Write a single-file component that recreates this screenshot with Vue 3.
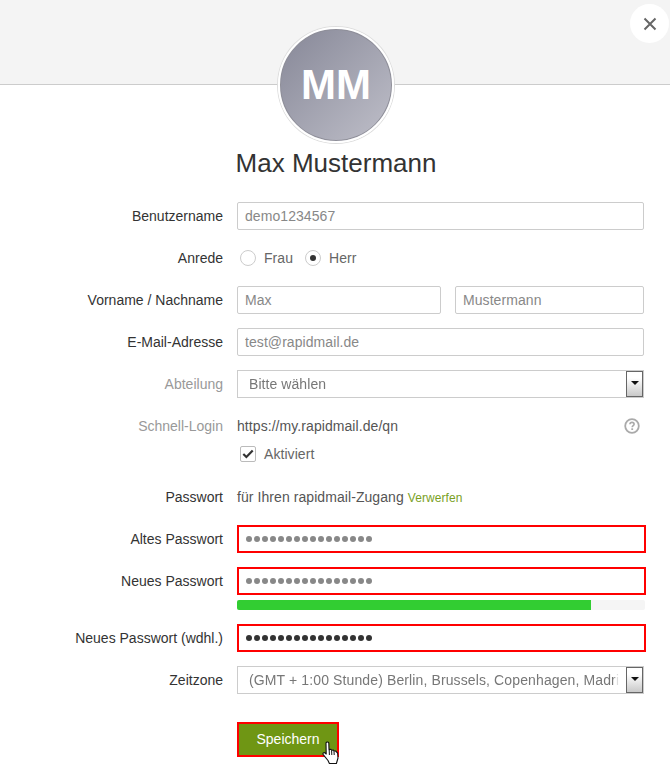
<template>
  <div class="page">
    <header class="band">
      <button class="close" type="button" aria-label="Schließen">
        <svg width="14" height="14" viewBox="0 0 14 14">
          <path d="M1.5 1.5 L12.5 12.5 M12.5 1.5 L1.5 12.5" stroke="#666" stroke-width="2" fill="none" />
        </svg>
      </button>
    </header>

    <div class="identity">
      <div class="avatar">MM</div>
      <h1 class="name">Max Mustermann</h1>
    </div>

    <form class="form" @submit.prevent>
      <div class="row">
        <label class="label">Benutzername</label>
        <input class="input" type="text" value="demo1234567" readonly />
      </div>

      <div class="row">
        <label class="label">Anrede</label>
        <div class="radios">
          <span class="radio"></span><span class="radio-text">Frau</span>
          <span class="radio on"></span><span class="radio-text">Herr</span>
        </div>
      </div>

      <div class="row">
        <label class="label">Vorname / Nachname</label>
        <div class="pair">
          <input class="input first" type="text" value="Max" readonly />
          <input class="input" type="text" value="Mustermann" readonly />
        </div>
      </div>

      <div class="row">
        <label class="label">E-Mail-Adresse</label>
        <input class="input" type="text" value="test@rapidmail.de" readonly />
      </div>

      <div class="row">
        <label class="label muted">Abteilung</label>
        <div class="select">
          <span class="select-text">Bitte wählen</span>
          <span class="select-btn"><i class="arrow"></i></span>
        </div>
      </div>

      <div class="row tight">
        <label class="label muted">Schnell-Login</label>
        <div class="quick">
          <span class="plain">https://my.rapidmail.de/qn</span>
          <svg class="help" width="16" height="16" viewBox="0 0 16 16">
            <circle cx="8" cy="8" r="6.8" fill="none" stroke="#aaa" stroke-width="1.8" />
            <path d="M5.9 6.3 C6 4.9 7 4.4 8 4.4 C9.2 4.4 10.1 5.1 10.1 6.2 C10.1 7.5 8.2 7.7 8.2 9.2" fill="none" stroke="#aaa" stroke-width="1.6" />
            <rect x="7.3" y="10.3" width="1.8" height="1.7" fill="#aaa" />
          </svg>
        </div>
      </div>

      <div class="row wide">
        <span class="label"></span>
        <div class="check-line">
          <span class="check">
            <svg width="12" height="10" viewBox="0 0 12 10">
              <path d="M1.3 5 L4.4 8 L10.7 1.5" fill="none" stroke="#333" stroke-width="2.2" />
            </svg>
          </span>
          <span class="radio-text">Aktiviert</span>
        </div>
      </div>

      <div class="row">
        <label class="label">Passwort</label>
        <div class="plain">für Ihren rapidmail-Zugang <a class="discard">Verwerfen</a></div>
      </div>

      <div class="row">
        <label class="label">Altes Passwort</label>
        <div class="secret"><i v-for="n in 16" :key="n" class="dot"></i></div>
      </div>

      <div class="row tight">
        <label class="label">Neues Passwort</label>
        <div class="secret"><i v-for="n in 16" :key="n" class="dot"></i></div>
      </div>

      <div class="meter-row">
        <div class="meter"><div class="meter-fill" :style="{ width: strength + '%' }"></div></div>
      </div>

      <div class="row">
        <label class="label">Neues Passwort (wdhl.)</label>
        <div class="secret dark"><i v-for="n in 16" :key="n" class="dot"></i></div>
      </div>

      <div class="row">
        <label class="label">Zeitzone</label>
        <div class="select">
          <span class="select-text wide-text">(GMT + 1:00 Stunde) Berlin, Brussels, Copenhagen, Madri</span>
          <span class="select-btn"><i class="arrow"></i></span>
        </div>
      </div>

      <div class="actions">
        <button class="save" type="submit">Speichern</button>
        <svg class="pointer" width="17" height="24" viewBox="0 0 17 24">
          <path d="M4 2 C4.4 .7 6.4 .7 6.8 2 L7 8.6 L9 8.2 L9.6 9.2 L11.4 9 L12 10 L13.6 10 L15.6 12 L16 17 L14.4 22.5 L7.4 22.5 L6 19.5 L1.2 13.6 C.4 12.2 2 11 3.2 12 L4.2 13 Z" fill="#fff" stroke="#111" stroke-width="1.1" stroke-linejoin="round" />
          <path d="M7.2 9 L7.4 14 M9.6 9.4 L9.8 14 M12 10.2 L12.2 14" stroke="#111" stroke-width="1" fill="none" />
        </svg>
      </div>
    </form>
  </div>
</template>

<script setup>
const strength = 86.8
</script>

<style>
html, body {
  margin: 0;
  background: #fff;
}
</style>

<style scoped>
.page {
  position: relative;
  width: 670px;
  height: 775px;
  overflow: hidden;
  font-family: "Liberation Sans", Arial, sans-serif;
  font-size: 14px;
  color: #333;
  background: #fff;
}

.band {
  height: 84px;
  background: #f4f4f4;
  border-bottom: 1px solid #ccc;
}

.close {
  position: absolute;
  top: 4px;
  left: 630px;
  width: 39px;
  height: 39px;
  padding: 0;
  border: 0;
  border-radius: 50%;
  background: #fff;
  display: flex;
  align-items: center;
  justify-content: center;
}

.identity {
  display: flex;
  flex-direction: column;
  align-items: center;
  padding-left: 2px;
  margin-top: -58px;
}

.avatar {
  width: 112px;
  height: 112px;
  border: 2px solid #fff;
  border-radius: 50%;
  box-shadow: 0 0 0 1px #ddd, inset 0 0 0 1px #8f8f99;
  background: linear-gradient(135deg, #868797, #bfbfc9);
  color: #fff;
  font-size: 42px;
  font-weight: bold;
  display: flex;
  align-items: center;
  justify-content: center;
}

.name {
  margin: 5px 0 0;
  font-size: 26px;
  font-weight: normal;
  line-height: 30px;
  color: #333;
}

.form {
  margin-top: 24px;
}

.row {
  display: flex;
  align-items: center;
  min-height: 28px;
  margin-bottom: 14px;
  padding-right: 26px;
}

.row.tight {
  margin-bottom: 0;
}

.row.wide {
  margin-bottom: 15px;
}

.label {
  flex: none;
  width: 223px;
  margin-right: 14px;
  text-align: right;
  white-space: nowrap;
}

.muted {
  color: #999;
}

.input {
  flex: 1;
  min-width: 0;
  box-sizing: border-box;
  height: 28px;
  padding: 0 7px;
  border: 1px solid #ccc;
  border-radius: 2px;
  font: inherit;
  letter-spacing: 0.07px;
  color: #888;
  background: #fff;
  outline: none;
}

.pair {
  flex: 1;
  min-width: 0;
  display: flex;
  gap: 14px;
}

.input.first {
  flex: none;
  width: 204px;
}

.radios {
  display: flex;
  align-items: center;
  padding-left: 3px;
}

.radio {
  width: 14px;
  height: 14px;
  border: 1px solid #ccc;
  border-radius: 50%;
  display: flex;
  align-items: center;
  justify-content: center;
}

.radio.on::after {
  content: "";
  width: 6px;
  height: 6px;
  border-radius: 50%;
  background: #333;
}

.radio-text {
  margin: 0 12px 0 8px;
  letter-spacing: 0.07px;
  color: #666;
}

.select {
  flex: 1;
  box-sizing: border-box;
  height: 28px;
  display: flex;
  align-items: center;
  min-width: 0;
  padding: 0 0 0 11px;
  border: 1px solid #ccc;
  background: #fff;
  color: #777;
}

.select-text {
  flex: 1;
  min-width: 0;
  overflow: hidden;
  white-space: nowrap;
  margin-right: 7px;
  letter-spacing: 0.07px;
  -webkit-mask-image: linear-gradient(to left, transparent, #000 6px);
  mask-image: linear-gradient(to left, transparent, #000 6px);
}

.select-text.wide-text {
  letter-spacing: 0.12px;
}

.select-btn {
  flex: none;
  box-sizing: border-box;
  width: 17px;
  height: 26px;
  border: 1px solid #666;
  background: linear-gradient(#fff 25%, #c9c9c9);
  display: flex;
  align-items: center;
  justify-content: center;
}

.arrow {
  width: 0;
  height: 0;
  margin-bottom: 3px;
  border: 4px solid transparent;
  border-top-color: #111;
  border-bottom: 0;
}

.plain {
  white-space: nowrap;
  letter-spacing: 0.07px;
  color: #555;
}

.quick {
  flex: 1;
  display: flex;
  align-items: center;
  justify-content: space-between;
  padding-right: 4px;
}

.help {
  flex: none;
}

.check-line {
  display: flex;
  align-items: center;
  padding-left: 3px;
}

.check {
  box-sizing: border-box;
  width: 16px;
  height: 16px;
  border: 1px solid #bbb;
  border-radius: 2px;
  display: flex;
  align-items: center;
  justify-content: center;
}

.discard {
  font-size: 12px;
  color: #7a9f1f;
}

.secret {
  flex: 1;
  box-sizing: border-box;
  height: 28px;
  display: flex;
  align-items: center;
  gap: 2px;
  padding-left: 7px;
  border: 2px solid #f00;
  margin-right: -2px;
  color: #888;
}

.secret.dark {
  color: #333;
}

.dot {
  width: 6px;
  height: 6px;
  border-radius: 50%;
  background: currentColor;
}

.meter-row {
  padding: 5px 26px 14px 237px;
}

.meter {
  height: 10px;
  margin-right: -1px;
  border-radius: 2px;
  background: #f5f5f5;
}

.meter-fill {
  height: 100%;
  border-radius: 2px 0 0 2px;
  background: #32cd32;
}

.actions {
  position: relative;
  padding: 14px 0 0 237px;
}

.save {
  box-sizing: border-box;
  display: block;
  width: 102px;
  height: 35px;
  padding: 0 0 2px;
  border: 2px solid #f00;
  background: #6f9614;
  color: #fff;
  font: inherit;
}

.pointer {
  position: absolute;
  left: 322px;
  top: 33px;
}
</style>
